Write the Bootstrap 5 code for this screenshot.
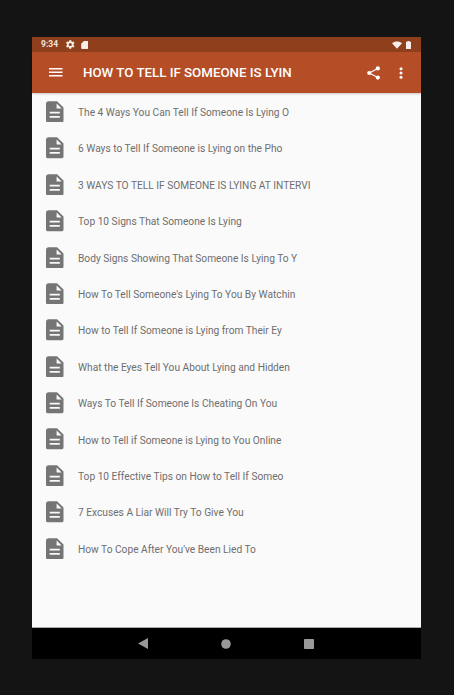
<!DOCTYPE html>
<html lang="en">
<head>
    <meta charset="UTF-8">
    <meta name="viewport" content="width=device-width, initial-scale=1.0">
    <title>How To Tell If Someone Is Lying</title>
    <link href="https://cdn.jsdelivr.net/npm/bootstrap@5.3.3/dist/css/bootstrap.min.css" rel="stylesheet">
    <style>
        body {
            background: #141414;
            font-family: Roboto, "Liberation Sans", sans-serif;
            padding: 37px 33px 36px 32px;
            height: 695px;
            overflow: hidden;
        }
        .phone-frame { width: 389px; height: 622px; background: #fafafa; }
        .status-strip {
            height: 15px;
            background: #8f3f1c;
            color: #f0e4de;
            font-size: 8.5px;
            font-weight: 700;
            padding: 0 10px 0 9px;
        }
        .status-gear { margin: 0 6px 0 8px; }
        .status-wifi { margin-right: 4px; }
        .app-bar {
            height: 41px;
            background: #b54d27;
            color: #fff;
            box-shadow: 0 1px 2px rgba(0,0,0,.2);
            position: relative;
        }
        .menu-slot { width: 51px; padding-left: 17px; }
        .app-title { font-size: 13.3px; font-weight: 500; width: 270px; white-space: nowrap; overflow: hidden; }
        .overflow-dots { margin: 0 18px 0 19px; }
        .topic-list { height: 534px; padding-top: 1px; }
        .topic-row { height: 36.4px; padding-left: 14px; }
        .topic-row svg { width: 17.5px; height: 21.5px; margin: -1px 14.5px 0 0; }
        .topic-text {
            font-size: 10.2px;
            color: #6e6e6e;
            padding-top: 1px;
            white-space: nowrap;
        }
        .nav-strip { height: 32px; background: #000; border-top: 1px solid #aaa; padding-right: 2px; }
        .nav-home { margin: 0 73px; }
    </style>
</head>
<body>
    <div class="phone-frame d-flex flex-column">
        <div class="status-strip d-flex align-items-center">
            <span>9:34</span>
            <svg class="status-gear" width="8.500" height="9" viewBox="2.500 2 19 20" fill="#f5eeea"><path d="M19.14 12.94c.04-.3.06-.61.06-.94 0-.32-.02-.64-.07-.94l2.03-1.58a.49.49 0 0 0 .12-.61l-1.92-3.32a.488.488 0 0 0-.59-.22l-2.39.96c-.5-.38-1.03-.7-1.62-.94l-.36-2.54a.484.484 0 0 0-.48-.41h-3.84c-.24 0-.43.17-.47.41l-.36 2.54c-.59.24-1.13.57-1.62.94l-2.39-.96c-.22-.08-.47 0-.59.22L2.74 8.87c-.12.21-.08.47.12.61l2.03 1.58c-.05.3-.09.63-.09.94s.02.64.07.94l-2.03 1.58a.49.49 0 0 0-.12.61l1.92 3.32c.12.22.37.29.59.22l2.39-.96c.5.38 1.03.7 1.62.94l.36 2.54c.05.24.24.41.48.41h3.84c.24 0 .44-.17.47-.41l.36-2.54c.59-.24 1.13-.56 1.62-.94l2.39.96c.22.08.47 0 .59-.22l1.92-3.32c.12-.22.07-.47-.12-.61l-2.01-1.58zM12 15.6c-1.98 0-3.6-1.62-3.6-3.6s1.62-3.6 3.6-3.6 3.6 1.62 3.6 3.6-1.62 3.6-3.6 3.6z"/></svg>
            <svg width="7.500" height="8" viewBox="0 0 16 18" fill="#f5eeea"><path d="M6 0h8a2 2 0 0 1 2 2v14a2 2 0 0 1-2 2H2a2 2 0 0 1-2-2V6z"/></svg>
            <svg class="status-wifi ms-auto" width="10" height="8" viewBox="0 0 22 16" fill="#f5eeea"><path d="M0 4C6-1.300 16-1.300 22 4L11 16z"/></svg>
            <svg width="5" height="8" viewBox="0 0 10 16" fill="#f5eeea"><path d="M3 0h4v1.500h3V16H0V1.500h3z"/></svg>
        </div>
        <div class="app-bar d-flex align-items-center">
            <div class="menu-slot">
                <svg class="d-block" width="13.500" height="8.500" viewBox="0 0 13.500 8.500" fill="#fff"><rect width="13.500" height="1.500"/><rect width="13.500" height="1.500" y="3.500"/><rect width="13.500" height="1.500" y="7"/></svg>
            </div>
            <div class="app-title">HOW TO TELL IF SOMEONE IS LYIN</div>
            <svg class="ms-auto" width="13" height="14" viewBox="0 0 15 16" fill="#fff"><circle cx="12.500" cy="2.700" r="2.400"/><circle cx="2.600" cy="8" r="2.400"/><circle cx="12.500" cy="13.300" r="2.400"/><path d="M2.600 8l9.900-5.300M2.600 8l9.900 5.300" stroke="#fff" stroke-width="1.300"/></svg>
            <svg class="overflow-dots" width="4" height="12" viewBox="0 0 4 12" fill="#fff"><circle cx="2" cy="1.700" r="1.500"/><circle cx="2" cy="6" r="1.500"/><circle cx="2" cy="10.300" r="1.500"/></svg>
        </div>
        <div class="topic-list" id="topicList"></div>
        <div class="nav-strip d-flex align-items-center justify-content-center">
            <svg width="10" height="11" viewBox="0 0 10 11" fill="#999"><path d="M10 0v11L0 5.500z"/></svg>
            <svg class="nav-home" width="10" height="10" viewBox="0 0 10 10" fill="#999"><circle cx="5" cy="5" r="4.800"/></svg>
            <svg width="10" height="10" viewBox="0 0 10 10" fill="#999"><rect width="10" height="10" rx=".8"/></svg>
        </div>
    </div>
    <script src="https://cdn.jsdelivr.net/npm/bootstrap@5.3.3/dist/js/bootstrap.bundle.min.js"></script>
    <script>
        const topics = [
            'The 4 Ways You Can Tell If Someone Is Lying O',
            '6 Ways to Tell If Someone is Lying on the Pho',
            '3 WAYS TO TELL IF SOMEONE IS LYING AT INTERVI',
            'Top 10 Signs That Someone Is Lying',
            'Body Signs Showing That Someone Is Lying To Y',
            "How To Tell Someone's Lying To You By Watchin",
            'How to Tell If Someone is Lying from Their Ey',
            'What the Eyes Tell You About Lying and Hidden',
            'Ways To Tell If Someone Is Cheating On You',
            'How to Tell if Someone is Lying to You Online',
            'Top 10 Effective Tips on How to Tell If Someo',
            '7 Excuses A Liar Will Try To Give You',
            "How To Cope After You've Been Lied To"
        ];
        const icon = '<svg viewBox="0 0 19 23"><path fill="#757575" fill-rule="evenodd" d="M3 0h9l7 7v14a2 2 0 0 1-2 2H2a2 2 0 0 1-2-2V3a3 3 0 0 1 3-3zM11.500 2.500v5.500h5.500zM4 11.500v2h11v-2zM4 16v2h11v-2z"/></svg>';
        document.getElementById('topicList').innerHTML = topics.map(t =>
            `<div class="topic-row d-flex align-items-center">${icon}<span class="topic-text">${t}</span></div>`
        ).join('');
    </script>
</body>
</html>
